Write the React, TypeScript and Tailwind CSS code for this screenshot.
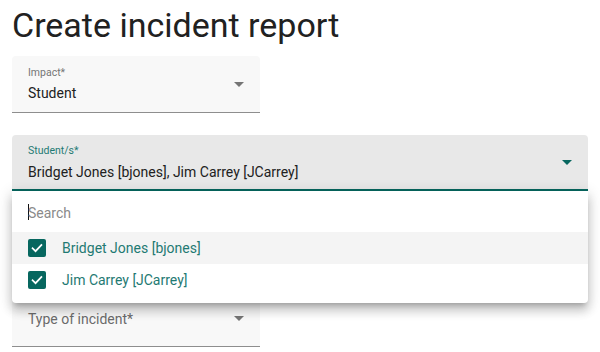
import React from "react";

function Arrow({ color }: { color: string }) {
  return (
    <svg width="10" height="5" viewBox="0 0 10 5" className="shrink-0">
      <path d="M0 0 L10 0 L5 5 Z" fill={color} />
    </svg>
  );
}

function Check() {
  return (
    <div className="w-[18px] h-[18px] rounded-[2px] bg-[#07675f] flex items-center justify-center shrink-0">
      <svg width="14" height="14" viewBox="0 0 24 24">
        <path d="M4.5 12.5 L9.5 17.5 L19.5 7" fill="none" stroke="#ffffff" strokeWidth="3" strokeLinecap="square" />
      </svg>
    </div>
  );
}

export default function App() {
  return (
    <div className="w-[600px] h-[352px] bg-white overflow-hidden relative" style={{ fontFamily: "Roboto, 'Liberation Sans', sans-serif" }}>
      <div className="pt-[5px] pl-[12px] text-[34px] leading-[40px] text-[#212121]">Create incident report</div>

      <div className="mt-[11px] ml-[12px] w-[248px] bg-[#f8f8f8] rounded-t-[4px] border-b border-[#8e8e8e] flex items-center pl-[16px] pr-[16px]">
        <div className="flex-1 pt-[10px] pb-[9px]">
          <div className="text-[10.5px] leading-[14px] text-[#757575]">Impact*</div>
          <div className="mt-[3px] text-[14px] leading-[20px] text-[#212121]">Student</div>
        </div>
        <Arrow color="#757575" />
      </div>

      <div className="relative mt-[22px] ml-[12px] w-[576px]">
        <div className="bg-[#e8e8e8] rounded-t-[4px] border-b-2 border-[#07675f] flex items-center pl-[16px] pr-[16px]">
          <div className="flex-1 pt-[9px] pb-[7px]">
            <div className="text-[10.5px] leading-[14px] text-[#1f7a73]">Student/s*</div>
            <div className="mt-[4px] text-[14px] leading-[20px] text-[#212121]">Bridget Jones [bjones], Jim Carrey [JCarrey]</div>
          </div>
          <Arrow color="#07675f" />
        </div>
        <div className="absolute left-0 top-full w-full z-10 bg-white rounded-b-[4px] pb-[7px] shadow-[0_5px_5px_-3px_rgba(0,0,0,0.2),0_8px_10px_1px_rgba(0,0,0,0.14),0_3px_14px_2px_rgba(0,0,0,0.12)]">
          <div className="h-[41px] flex items-center pl-[16px]">
            <div className="w-[1px] h-[16px] bg-[#111] mr-[-1px] mt-[1px]" />
            <span className="text-[14px] leading-[20px] text-[#8a8a8a] mt-[2px]">Search</span>
          </div>
          <div className="h-[32px] bg-[#f4f4f4] flex items-center pl-[16px] gap-[16px]">
            <Check />
            <span className="text-[14px] leading-[20px] text-[#1f7a73]">Bridget Jones [bjones]</span>
          </div>
          <div className="h-[32px] flex items-center pl-[16px] gap-[16px]">
            <Check />
            <span className="text-[14px] leading-[20px] text-[#1f7a73]">Jim Carrey [JCarrey]</span>
          </div>
        </div>
      </div>

      <div className="mt-[100px] ml-[12px] w-[248px] h-[56px] bg-[#f8f8f8] rounded-t-[4px] border-b border-[#8e8e8e] flex items-center pl-[16px] pr-[16px]">
        <div className="flex-1 text-[14px] leading-[20px] text-[#6b6b6b]">Type of incident*</div>
        <Arrow color="#757575" />
      </div>
    </div>
  );
}
